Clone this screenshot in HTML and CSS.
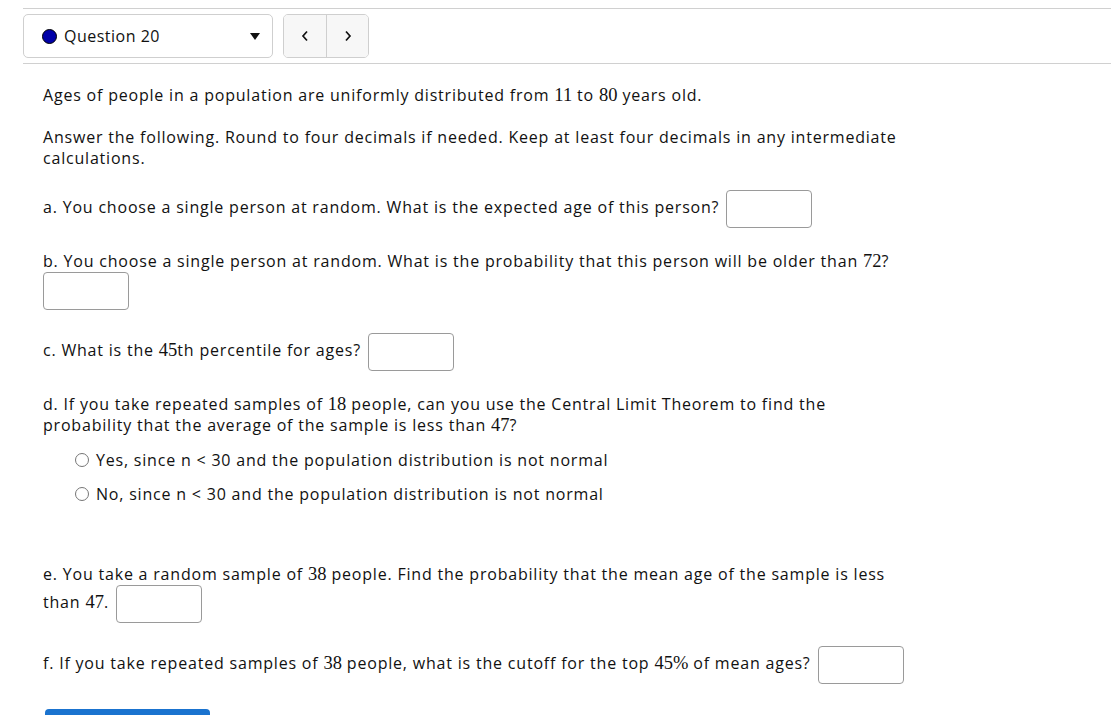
FILE: index.html
```html
<!DOCTYPE html>
<html>
<head>
<meta charset="utf-8">
<link rel="stylesheet" href="styles.css">
</head>
<body>
<div class="page">
  <div class="navbar">
    <div class="qselect">
      <span class="dot"></span>
      <span class="qlabel">Question 20</span>
      <span class="caret"></span>
    </div>
    <div class="navbtns">
      <button class="nbtn"><svg width="8" height="12" viewBox="0 0 8 12"><polyline points="6,1.5 2,6 6,10.5" fill="none" stroke="#111" stroke-width="1.7"/></svg></button>
      <button class="nbtn"><svg width="8" height="12" viewBox="0 0 8 12"><polyline points="2,1.5 6,6 2,10.5" fill="none" stroke="#111" stroke-width="1.7"/></svg></button>
    </div>
  </div>
  <div class="question">
    <p class="p1">Ages of people in a population are uniformly distributed from <span class="m">11</span> to <span class="m">80</span> years old.</p>
    <p class="p2">Answer the following. Round to four decimals if needed. Keep at least four decimals in any intermediate calculations.</p>
    <p class="pa">a. You choose a single person at random. What is the expected age of this person? <input class="ans" type="text"></p>
    <p class="pb">b. You choose a single person at random. What is the probability that this person will be older than <span class="m">72</span>?</p>
    <div class="pbi"><input class="ans first" type="text"></div>
    <p class="pc">c. What is the <span class="m">45</span>th percentile for ages? <input class="ans" type="text"></p>
    <p class="pd">d. If you take repeated samples of <span class="m">18</span> people, can you use the Central Limit Theorem to find the probability that the average of the sample is less than <span class="m">47</span>?</p>
    <ul class="choices">
      <li><span class="radio"></span>Yes, since n &lt; 30 and the population distribution is not normal</li>
      <li><span class="radio"></span>No, since n &lt; 30 and the population distribution is not normal</li>
    </ul>
    <p class="pe">e. You take a random sample of <span class="m">38</span> people. Find the probability that the mean age of the sample is less than <span class="m">47</span>. <input class="ans" type="text"></p>
    <p class="pf">f. If you take repeated samples of <span class="m">38</span> people, what is the cutoff for the top <span class="m">45%</span> of mean ages? <input class="ans" type="text"></p>
    <button class="submit">Submit Question</button>
  </div>
</div>
</body>
</html>
```
FILE: styles.css
```css
html, body {
  margin: 0;
  padding: 0;
  background: #fff;
}
body {
  font-family: "Open Sans", "Liberation Sans", sans-serif;
  font-size: 16px;
  color: #111;
}
.page {
  padding: 8px 0 0 23px;
}
.navbar {
  border-top: 1px solid #d0d0d0;
  border-bottom: 1px solid #d0d0d0;
  padding: 5px 0 5px 0;
  display: flex;
  align-items: center;
  gap: 10px;
}
.qselect {
  box-sizing: border-box;
  width: 250px;
  height: 44px;
  border: 1px solid #cfcfcf;
  border-radius: 5px;
  display: flex;
  align-items: center;
  padding: 0 12px 0 18px;
  background: #fff;
}
.dot {
  box-sizing: border-box;
  width: 15px;
  height: 15px;
  border-radius: 50%;
  background: #0000a8;
  border: 1px solid #000;
  margin-right: 7px;
}
.qlabel {
  flex: 1;
  font-size: 16px;
  letter-spacing: 0.5px;
}
.caret {
  width: 0;
  height: 0;
  border-left: 5px solid transparent;
  border-right: 5px solid transparent;
  border-top: 7px solid #111;
}
.navbtns {
  display: flex;
  height: 44px;
  box-sizing: border-box;
  border: 1px solid #cfcfcf;
  border-radius: 5px;
  overflow: hidden;
}
.nbtn {
  width: 42px;
  height: 42px;
  border: none;
  background: #f7f7f7;
  display: flex;
  align-items: center;
  justify-content: center;
  padding: 0;
}
.nbtn + .nbtn {
  border-left: 1px solid #cfcfcf;
}
.question {
  padding-left: 20px;
  width: 868px;
  line-height: 21px;
  letter-spacing: 0.8px;
}
.question p {
  margin: 0;
}
.m {
  font-family: "Liberation Serif", "DejaVu Serif", serif;
  font-size: 18.5px;
  line-height: 0;
  letter-spacing: 0;
}
.ans {
  box-sizing: border-box;
  width: 86px;
  height: 38px;
  border: 1px solid #9a9a9a;
  border-radius: 4px;
  vertical-align: middle;
  margin: 0 0 0 2px;
  padding: 0;
  background: #fff;
}
.ans.first {
  margin-left: 0;
  display: block;
}
.p1 { margin-top: 21px !important; }
.p2 { margin-top: 21px !important; }
.pa { margin-top: 21px !important; }
.pb { margin-top: 23px !important; }
.pbi { margin-top: 0; }
.pc { margin-top: 23px !important; }
.pd { margin-top: 23px !important; }
.choices {
  list-style: none;
  margin: 7px 0 0 0;
  padding: 0 0 0 32px;
}
.choices li {
  height: 34px;
  display: flex;
  align-items: center;
}
.radio {
  box-sizing: border-box;
  width: 14px;
  height: 14px;
  border: 1px solid #767676;
  border-radius: 50%;
  margin-right: 7px;
  background: #fff;
}
.pe { margin-top: 53px !important; }
.pf { margin-top: 23px !important; }
.submit {
  margin: 25px 0 0 2px;
  width: 165px;
  height: 40px;
  background: #1a73cf;
  color: #fff;
  border: none;
  border-radius: 4px;
  font-family: inherit;
  font-size: 16px;
}
```
